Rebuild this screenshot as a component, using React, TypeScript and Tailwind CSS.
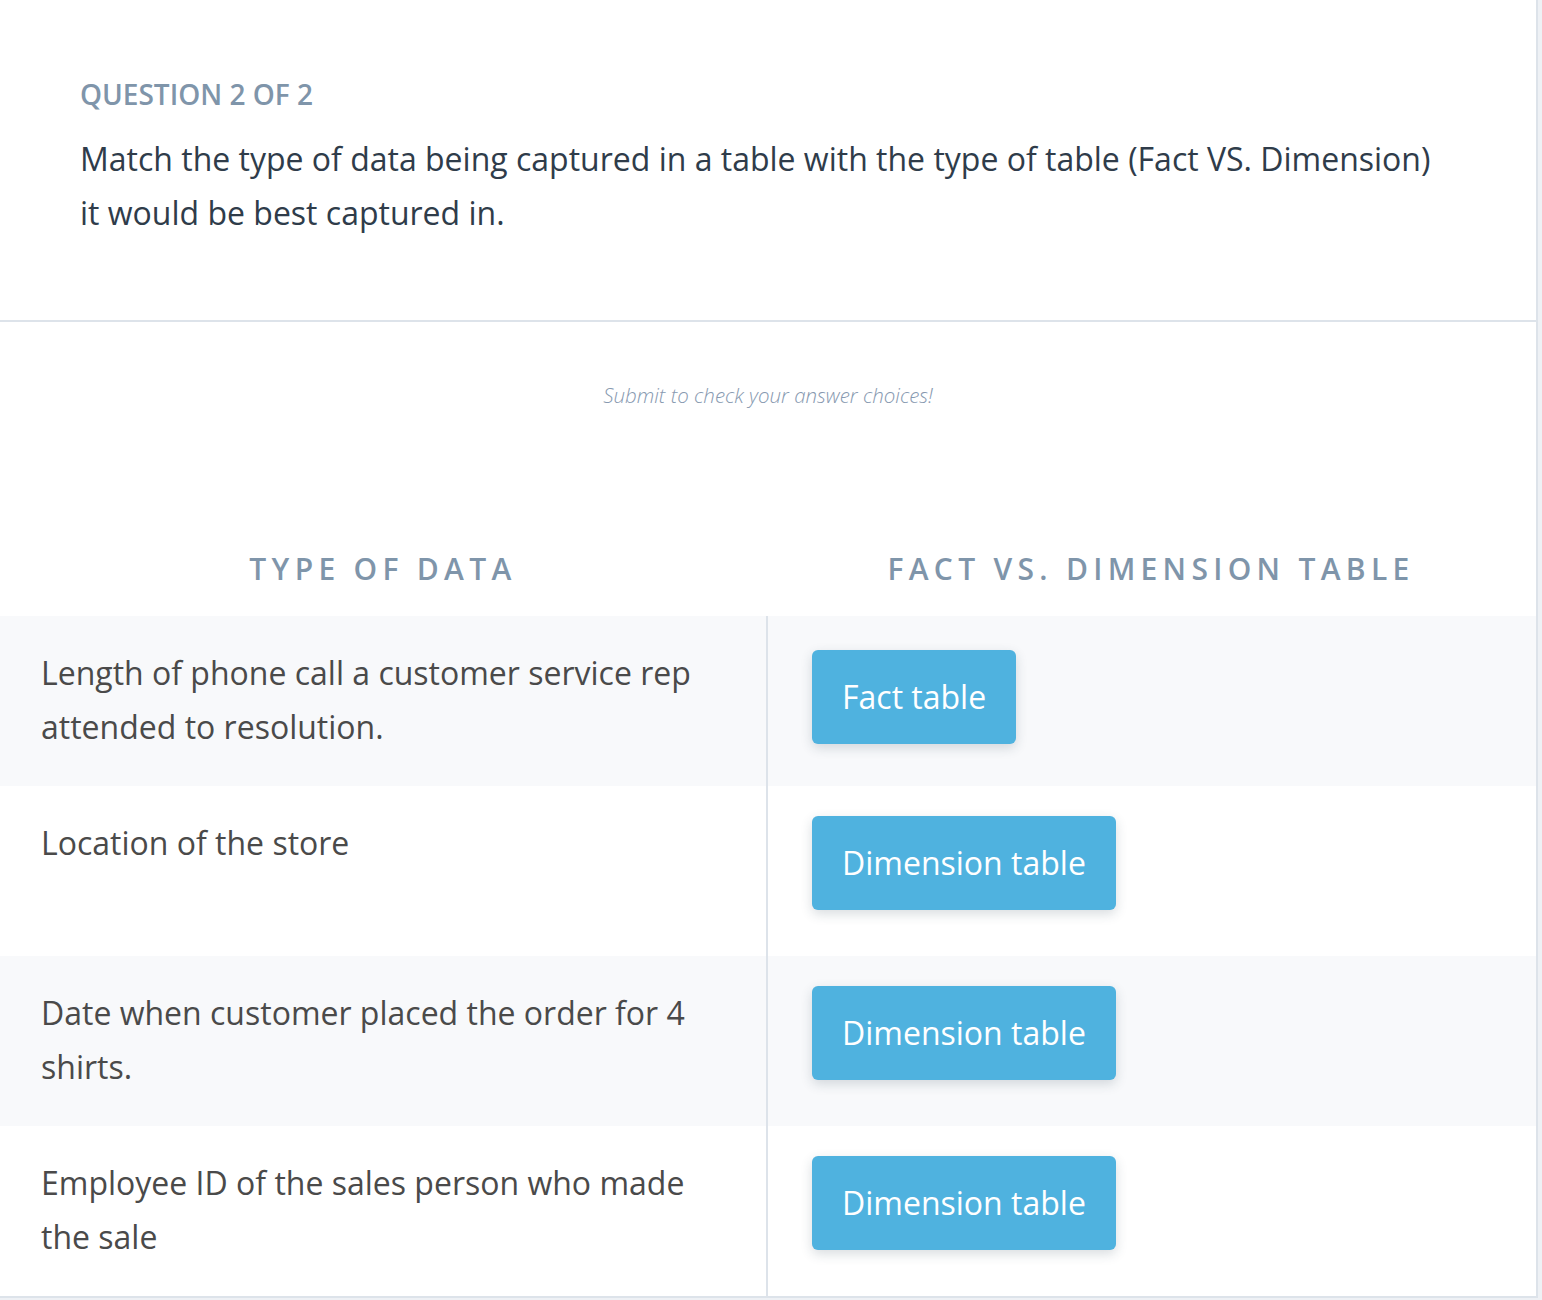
import React from "react";

interface Row {
  text: string;
  answer: string;
}

const rows: Row[] = [
  { text: "Length of phone call a customer service rep attended to resolution.", answer: "Fact table" },
  { text: "Location of the store", answer: "Dimension table" },
  { text: "Date when customer placed the order for 4 shirts.", answer: "Dimension table" },
  { text: "Employee ID of the sales person who made the sale", answer: "Dimension table" },
];

function App() {
  return (
    <div
      className="min-h-[1300px] w-full bg-[#eef1f5]"
      style={{ fontFamily: '"Open Sans", "Liberation Sans", sans-serif' }}
    >
      <div className="w-[1538px] bg-white border-r-2 border-b-2 border-[#dde3ea]">
        {/* question header */}
        <div className="pl-[80px] pr-[90px] pt-[76px] pb-[80px] border-b-2 border-[#dde3ea]">
          <p className="text-[28px] leading-[36px] font-semibold text-[#7f95aa]">
            QUESTION 2 OF 2
          </p>
          <p className="mt-[20px] text-[32px] leading-[54px] text-[#2f3c4a]">
            Match the type of data being captured in a table with the type of table (Fact VS. Dimension) it would be
            best captured in.
          </p>
        </div>

        <p className="mt-[58px] text-center text-[20.5px] leading-[30px] italic font-light text-[#8799b0]">
          Submit to check your answer choices!
        </p>

        <div className="mt-[139px] mb-[27px] grid grid-cols-[766px_770px]">
          <h3 className="text-center text-[30px] leading-[40px] font-semibold tracking-[5.3px] text-[#7f95aa]">
            TYPE OF DATA
          </h3>
          <h3 className="text-center text-[30px] leading-[40px] font-semibold tracking-[5.3px] text-[#7f95aa]">
            FACT VS. DIMENSION TABLE
          </h3>
        </div>

        <div className="flex flex-col">
          {rows.map((row, i) => (
            <div
              key={i}
              className={`grid grid-cols-[766px_770px] h-[170px] ${i % 2 === 0 ? "bg-[#f8f9fb]" : "bg-white"}`}
            >
              <div className="pl-[41px] pr-[60px] pt-[30px] text-[32px] leading-[54px] text-[#4a4a4a]">
                {row.text}
              </div>
              <div className={`border-l-2 border-[#dde3ea] pl-[44px] ${i === 0 ? "pt-[34px]" : "pt-[30px]"}`}>
                <button className="h-[94px] px-[30px] rounded-[6px] bg-[#4fb2df] text-white text-[32px] shadow-[0_4px_12px_rgba(40,60,80,0.18)]">
                  {row.answer}
                </button>
              </div>
            </div>
          ))}
        </div>
      </div>
    </div>
  );
}

export default App;
